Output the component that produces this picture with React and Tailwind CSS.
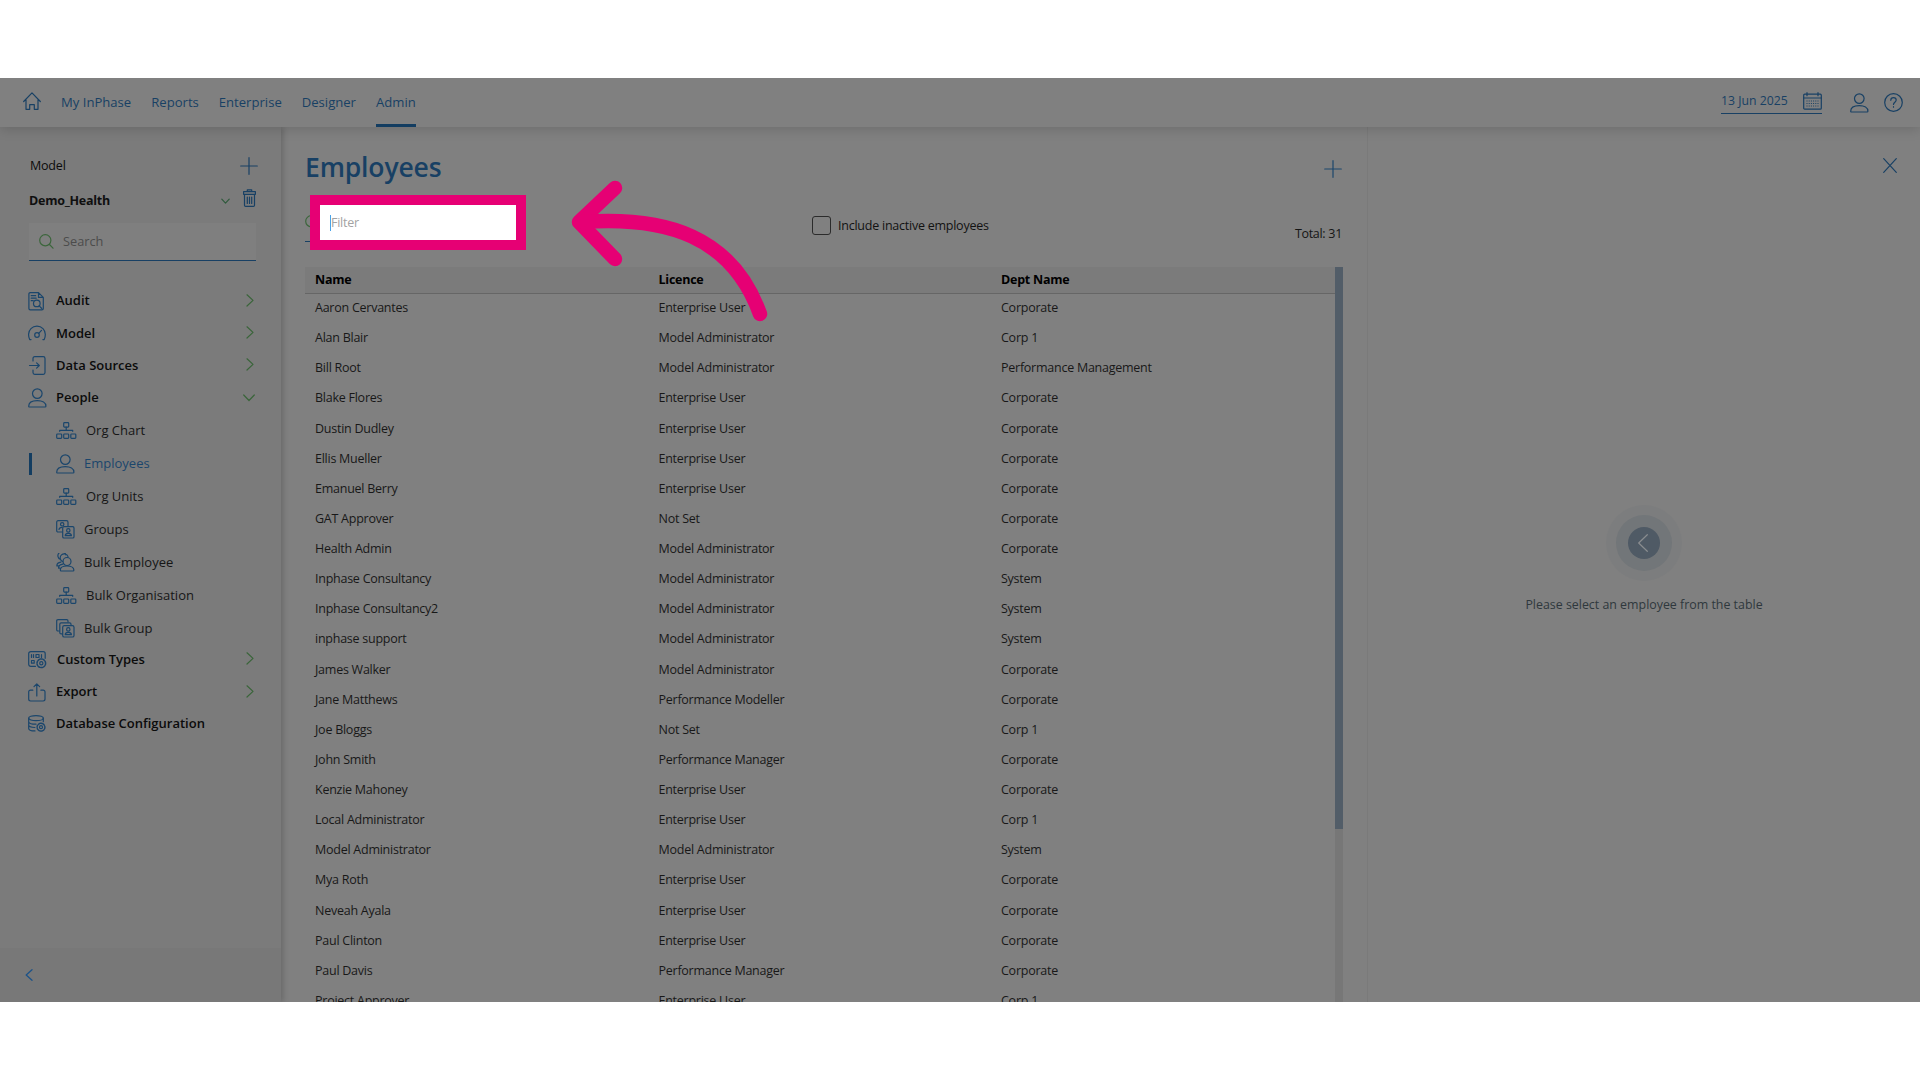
import { useState } from 'react'

const navItems = ['My InPhase', 'Reports', 'Enterprise', 'Designer', 'Admin']

const employees = [
  ['Aaron Cervantes', 'Enterprise User', 'Corporate'],
  ['Alan Blair', 'Model Administrator', 'Corp 1'],
  ['Bill Root', 'Model Administrator', 'Performance Management'],
  ['Blake Flores', 'Enterprise User', 'Corporate'],
  ['Dustin Dudley', 'Enterprise User', 'Corporate'],
  ['Ellis Mueller', 'Enterprise User', 'Corporate'],
  ['Emanuel Berry', 'Enterprise User', 'Corporate'],
  ['GAT Approver', 'Not Set', 'Corporate'],
  ['Health Admin', 'Model Administrator', 'Corporate'],
  ['Inphase Consultancy', 'Model Administrator', 'System'],
  ['Inphase Consultancy2', 'Model Administrator', 'System'],
  ['inphase support', 'Model Administrator', 'System'],
  ['James Walker', 'Model Administrator', 'Corporate'],
  ['Jane Matthews', 'Performance Modeller', 'Corporate'],
  ['Joe Bloggs', 'Not Set', 'Corp 1'],
  ['John Smith', 'Performance Manager', 'Corporate'],
  ['Kenzie Mahoney', 'Enterprise User', 'Corporate'],
  ['Local Administrator', 'Enterprise User', 'Corp 1'],
  ['Model Administrator', 'Model Administrator', 'System'],
  ['Mya Roth', 'Enterprise User', 'Corporate'],
  ['Neveah Ayala', 'Enterprise User', 'Corporate'],
  ['Paul Clinton', 'Enterprise User', 'Corporate'],
  ['Paul Davis', 'Performance Manager', 'Corporate'],
  ['Project Approver', 'Enterprise User', 'Corp 1']
]

function Icon({ w = 18, h = 18, className = '', sw = 1.2, children }) {
  return (
    <svg
      width={w}
      height={h}
      viewBox={`0 0 ${w} ${h}`}
      fill="none"
      stroke="currentColor"
      strokeWidth={sw}
      strokeLinecap="round"
      strokeLinejoin="round"
      className={`shrink-0 ${className}`}
    >
      {children}
    </svg>
  )
}

const PersonIcon = ({ className }) => (
  <Icon w={19} h={20} className={className}>
    <circle cx="9.3" cy="5.6" r="4.8" />
    <path d="M.7 18.2c0-3.6 3.6-5.6 8.6-5.6s8.600 2 8.600 5.600c0 .5-.3.8-.8.8H1.500c-.5 0-.8-.3-.8-.8z" />
  </Icon>
)

const OrgIcon = () => (
  <Icon w={21} h={17}>
    <rect x="7.7" y=".7" width="5" height="4.400" rx=".8" />
    <path d="M10.200 5.200v3M3.700 9.300V8.300h13v1" />
    <rect x=".7" y="12" width="5" height="4.400" rx=".8" />
    <rect x="7.7" y="12" width="5" height="4.400" rx=".8" />
    <rect x="14.800" y="12" width="5" height="4.400" rx=".8" />
  </Icon>
)

const AuditIcon = () => (
  <Icon w={17} h={19}>
    <path d="M10.500.6H2.300C1.400.6.9 1.100.9 2v14.500c0 .9.500 1.400 1.400 1.400h11.600c.9 0 1.400-.5 1.400-1.400V5.400L10.500.6v4.800h4.800M3.200 3.700h4.500M3.200 6.200h5M3.200 8.700h2" />
    <circle cx="8.800" cy="11.400" r="3.300" />
    <path d="M11.200 13.800l2.600 2.700" />
  </Icon>
)

const GaugeIcon = () => (
  <Icon w={18} h={16}>
    <path d="M3 14.600H1.700C1 13.200.6 11.500.6 9.700A8.300 8.300 0 0 1 9 1.100a8.300 8.300 0 0 1 8.300 8.600c0 1.800-.4 3.500-1.100 4.900h-1.300" />
    <circle cx="9" cy="10" r="2.300" />
    <path d="M10.700 8.300l2.800-2.900" />
  </Icon>
)

const SourceIcon = () => (
  <Icon w={18} h={19}>
    <path d="M5 5V2.500C5 1.400 5.700.7 6.800.7h8.400c1.100 0 1.800.7 1.800 1.800v14c0 1.100-.7 1.800-1.800 1.800H6.800C5.700 18.300 5 17.600 5 16.500V14M1.500 9.500h9.700M8.600 6.800l2.700 2.700-2.700 2.700" />
  </Icon>
)

const GroupsIcon = () => (
  <Icon w={19} h={19}>
    <path d="M6 12H2.200C1.200 12 .7 11.500.7 10.500V2.200C.7 1.200 1.200.7 2.200.7h8.300c1 0 1.500.5 1.500 1.500V6" />
    <circle cx="6.200" cy="4.300" r="1.700" />
    <path d="M3 9.500c.2-1.500 1.400-2.200 3-2.200" />
    <rect x="6.700" y="6.700" width="11.300" height="11.300" rx="1.300" />
    <circle cx="12.300" cy="10.400" r="1.700" />
    <path d="M9.200 15.700c0-1.600 1.200-2.400 3.100-2.400s3.100.8 3.100 2.400z" />
  </Icon>
)

const BulkPeopleIcon = () => (
  <Icon w={19} h={19}>
    <circle cx="11" cy="8.500" r="4" />
    <path d="M4.300 17c0-2.600 2.800-4 6.700-4s6.700 1.400 6.900 4c0 .7-.3 1-.9 1H5.200c-.6 0-.9-.3-.9-1z" />
    <path d="M6.600 8.500A4 4 0 1 1 12 3.600M4.600 6.500A4 4 0 1 1 9.800 1.800M2.600 15.200c-.2-2.400 1.500-3.600 4.200-4M.9 12.900c-.2-2.100 1.400-3.400 4-3.800M2.600 15.200h1.500M.9 12.900h1.600" />
  </Icon>
)

const BulkGroupIcon = () => (
  <Icon w={19} h={19}>
    <path d="M3 12H2C1.100 12 .7 11.500.7 10.700V2C.7 1.100 1.100.7 2 .7h8.700c.8 0 1.300.4 1.300 1.300v1" />
    <path d="M6.300 14.900H5.100c-.8 0-1.300-.4-1.300-1.300V5.200c0-.9.5-1.300 1.300-1.300h8.600c.8 0 1.300.4 1.300 1.300v1" />
    <rect x="6.700" y="6.700" width="11.300" height="11.300" rx="1.600" />
    <circle cx="12.300" cy="10.400" r="1.700" />
    <path d="M9.200 15.700c0-1.600 1.200-2.400 3.100-2.400s3.100.8 3.100 2.400z" />
  </Icon>
)

const TypesIcon = () => (
  <Icon w={19} h={18}>
    <path d="M7.500 15.300H2.800C1.500 15.300.7 14.600.7 13.300V2.700C.7 1.400 1.500.7 2.800.7h12.400c1.300 0 2 .7 2 2v4.600" />
    <path d="M3.500 3.500v3M5.500 3.500v3M8 3.500h3v3H8zM13.500 3.500v3M3.500 9.500h2.700v2.700H3.500z" />
    <circle cx="13.300" cy="12.300" r="4.300" strokeDasharray="1.700 1" strokeWidth="1.500" />
    <circle cx="13.300" cy="12.300" r="1.600" />
  </Icon>
)

const ExportIcon = () => (
  <Icon w={18} h={19}>
    <path d="M4.800 7.200H2.600C1.400 7.200.7 7.900.7 9.100v7c0 1.200.7 1.900 1.900 1.900h12.500c1.200 0 1.900-.7 1.900-1.900v-7c0-1.200-.7-1.900-1.900-1.900h-2.200M8.800 13V.8M6 3.600L8.800.8l2.800 2.800" />
  </Icon>
)

const DatabaseIcon = () => (
  <Icon w={18} h={18}>
    <ellipse cx="8" cy="3.200" rx="7.300" ry="2.500" />
    <path d="M.7 3.200v10.200c0 1.400 3 2.500 6.300 2.500M15.300 3.200v3.500M.7 6.700c0 1.400 3.300 2.500 7.300 2.500M.7 10c0 1.300 2.700 2.400 6.200 2.500" />
    <circle cx="13" cy="12.200" r="3.900" strokeDasharray="1.600 .9" strokeWidth="1.400" />
    <circle cx="13" cy="12.200" r="1.500" />
  </Icon>
)

const Chevron = ({ down }) =>
  down ? (
    <Icon w={12} h={8} className="text-[#3a653a]">
      <path d="M.7 1l5.300 5.500L11.300 1" />
    </Icon>
  ) : (
    <Icon w={8} h={13} className="mr-px mb-0.5 text-[#3a653a]">
      <path d="M1 .8l6 5.600L1 12" />
    </Icon>
  )

const PlusIcon = () => (
  <Icon w={18} h={18}>
    <path d="M9 .7v16.600M.7 9h16.600" />
  </Icon>
)

function Section({ icon, label, arrow, wide }) {
  return (
    <div className="flex h-[32.200px] items-center pr-[26px] pl-7">
      <span className={wide ? 'flex w-[29px] text-[#1b466c]' : 'flex w-7 text-[#1b466c]'}>{icon}</span>
      <span className="flex-1 text-[13px] font-semibold text-[#0b0b0b]">{label}</span>
      {arrow && <Chevron down={arrow === 'down'} />}
    </div>
  )
}

function SubItem({ icon, label, active, wide }) {
  return (
    <div className="flex h-[33px] items-center pl-[29px]">
      <span className={active ? 'h-[22px] w-[3px] bg-[#133d61]' : 'w-[3px]'} />
      <span className={wide ? 'ml-6 flex w-[30px] text-[#1b466c]' : 'ml-6 flex w-7 text-[#1b466c]'}>{icon}</span>
      <span className={active ? 'text-[13px] text-[#1b466c]' : 'text-[13px] text-[#161616]'}>{label}</span>
    </div>
  )
}

function Header() {
  return (
    <header className="relative z-10 flex h-[49px] shrink-0 items-center bg-[#808080] pl-[23px] text-[#184064] shadow-[0_2px_12px_rgba(0,0,0,0.16)]">
      <Icon w={18} h={18} className="mb-1">
        <path d="M.7 9.500L9 .9l8.300 8.600M3 8v9.300h3.700v-4.600h4.600v4.600H15V8" />
      </Icon>
      <nav className="ml-5 flex h-full gap-[20px] text-[13.100px]">
        {navItems.map(item => (
          <a
            key={item}
            className={`flex items-center border-b-3 pt-[3px] ${item === 'Admin' ? 'border-[#133d61]' : 'border-transparent'}`}
          >
            {item}
          </a>
        ))}
      </nav>
      <div className="ml-auto flex items-center pr-[17px]">
        <div className="mt-px flex h-[22px] w-[101px] items-start justify-between border-b border-[#184064] text-[12.250px] leading-[17px]">
          <span>13 Jun 2025</span>
          <Icon w={19} h={18}>
            <rect x=".7" y="2.200" width="17.600" height="15" rx="1" />
            <path d="M.7 6h17.600M4 .7v3M15 .7v3" />
            <path d="M3.500 9h12.500M3.500 11.500h12.500M3.500 14h12.500" strokeDasharray="1 1.200" strokeLinecap="butt" />
          </Icon>
        </div>
        <PersonIcon className="ml-7" />
        <Icon w={19} h={19} className="ml-[15px]">
          <circle cx="9.500" cy="9.500" r="8.800" />
          <path d="M6.800 7.300c0-1.600 1.100-2.600 2.700-2.600s2.700 1 2.700 2.400c0 2-2.700 2.200-2.700 4.300M9.500 13.700v.5" />
        </Icon>
      </div>
    </header>
  )
}

function Sidebar() {
  return (
    <aside className="flex w-[281px] shrink-0 flex-col bg-[#7b7b7b] shadow-[2px_0_6px_rgba(0,0,0,0.2)]">
      <div className="mt-[29px] flex h-5 items-center justify-between pr-[23px] pl-[30px]">
        <span className="text-[12.500px] tracking-[-0.200px] text-[#0b0b0b]">Model</span>
        <span className="text-[#184064]"><PlusIcon /></span>
      </div>
      <div className="mt-[15px] flex h-5 items-center pr-[25px] pl-[29px]">
        <span className="flex-1 pt-px text-[12.500px] font-bold tracking-[-0.250px] text-[#0f0f0f]">Demo_Health</span>
        <Icon w={9} h={7} className="mr-[13px] text-[#2f5a3c]">
          <path d="M.8 1.200l3.700 3.900 3.700-3.900" />
        </Icon>
        <Icon w={13} h={18} className="mb-1.5 text-[#184064]">
          <path d="M.6 2.700h11.800v2.600H.6zM4.300 2.500V.8h4.400v1.700M1.500 5.500v10.700c0 .7.400 1.100 1.100 1.100h7.800c.7 0 1.100-.4 1.100-1.100V5.500M4.300 8v6.500M6.500 8v6.500M8.700 8v6.500" />
        </Icon>
      </div>
      <div className="mt-[12px] mr-[25px] ml-[29px] flex h-[38px] items-center border-b border-[#184064] bg-[#7f7f7f] pl-[10px]">
        <Icon w={15} h={15} className="text-[#3c663c]">
          <circle cx="6.300" cy="6.300" r="5.600" />
          <path d="M10.500 10.500l3.500 3.700" />
        </Icon>
        <span className="ml-[9px] text-[12.750px] text-[#4c4c4c]">Search</span>
      </div>

      <div className="mt-[24px] flex flex-1 flex-col">
        <Section icon={<AuditIcon />} label="Audit" arrow="right" />
        <Section icon={<GaugeIcon />} label="Model" arrow="right" />
        <Section icon={<SourceIcon />} label="Data Sources" arrow="right" />
        <Section icon={<PersonIcon />} label="People" arrow="down" />
        <div className="mt-[0.500px] -mb-[1.500px]">
          <SubItem icon={<OrgIcon />} label="Org Chart" wide />
          <SubItem icon={<PersonIcon />} label="Employees" active />
          <SubItem icon={<OrgIcon />} label="Org Units" wide />
          <SubItem icon={<GroupsIcon />} label="Groups" />
          <SubItem icon={<BulkPeopleIcon />} label="Bulk Employee" />
          <SubItem icon={<OrgIcon />} label="Bulk Organisation" wide />
          <SubItem icon={<BulkGroupIcon />} label="Bulk Group" />
        </div>
        <Section icon={<TypesIcon />} label="Custom Types" arrow="right" wide />
        <Section icon={<ExportIcon />} label="Export" arrow="right" />
        <Section icon={<DatabaseIcon />} label="Database Configuration" />
      </div>

      <div className="flex h-[54px] items-center bg-[#787878] pl-[25px] text-[#1d5388]">
        <Icon w={8} h={12} sw={1.3}>
          <path d="M7 .7L1.200 6 7 11.300" />
        </Icon>
      </div>
    </aside>
  )
}

function EmployeesPanel() {
  const [inactive, setInactive] = useState(false)

  return (
    <main className="flex min-w-0 flex-1 flex-col overflow-hidden px-6 pt-[21px]">
      <div className="flex h-10 items-center justify-between">
        <h1 className="text-[26.500px] font-semibold tracking-[-0.150px] text-[#184064]">Employees</h1>
        <span className="pt-px pr-px text-[#1b466c]"><PlusIcon /></span>
      </div>

      <div className="mt-[7px] flex h-[72px] items-start">
        <div className="relative flex h-[55px] w-[219px] shrink-0 items-center">
          <Icon w={15} h={15} className="text-[#3c663c]">
            <circle cx="6.300" cy="6.300" r="5.600" />
          </Icon>
          <div className="absolute top-[46px] left-0 h-px w-5 bg-[#184064]" />
          {/* Highlighted filter box */}
          <div className="absolute top-0 left-[5px] flex h-[55px] w-[216px] items-center border-10 border-[#e60074] bg-white pl-[10px]">
            <span className="h-4 w-px bg-[#4aa3e8]" />
            <span className="pt-px text-[12.500px] tracking-[-0.250px] text-[#a3a3a3]">Filter</span>
          </div>
        </div>
        <label className="mt-[21px] ml-[288px] flex items-center gap-[7px] text-[12.500px] tracking-[-0.240px] text-[#121212]">
          <button
            onClick={() => setInactive(!inactive)}
            className="h-[19px] w-[19px] rounded-[3px] border border-[#2b2b2b]"
          />
          <span className="pt-px">Include inactive employees</span>
        </label>
        <span className="mt-[30px] mr-px ml-auto text-[12.500px] tracking-[-0.300px] text-[#151515]">Total: 31</span>
      </div>

      <div className="flex min-h-0 flex-1">
        <div className="min-w-0 flex-1 overflow-hidden text-[12.500px] tracking-[-0.250px] text-[#181818]">
          <div className="grid h-[27px] grid-cols-[343.500px_342.500px_1fr] items-center border-b border-[#666] bg-[#7b7b7b] pl-[10px] font-bold text-black">
            <span>Name</span>
            <span>Licence</span>
            <span>Dept Name</span>
          </div>
          <div className="-mt-[0.700px]">
            {employees.map(([name, licence, dept]) => (
              <div key={name} className="grid h-[30.130px] grid-cols-[343.500px_342.500px_1fr] items-center pl-[10px]">
                <span>{name}</span>
                <span>{licence}</span>
                <span>{dept}</span>
              </div>
            ))}
          </div>
        </div>
        <div className="w-[8px] bg-[#777]">
          <div className="h-[562px] bg-[#525d68]" />
        </div>
      </div>
    </main>
  )
}

function DetailPanel() {
  return (
    <section className="flex w-[553px] shrink-0 flex-col border-l border-[#7a7a7a]">
      <div className="flex justify-end pt-[31px] pr-[23px] text-[#184064]">
        <Icon w={14} h={15}>
          <path d="M.7.7l12.600 13.600M13.300.7L.7 14.300" />
        </Icon>
      </div>
      <div className="mt-[332px] flex flex-col items-center">
        <div className="flex size-[76px] items-center justify-center rounded-full bg-[#7c7d7e]">
          <div className="flex size-14 items-center justify-center rounded-full bg-[#727679]">
            <div className="flex size-8 items-center justify-center rounded-full bg-[#4f5a65] text-[#8a8d90]">
              <Icon w={10} h={18} className="mr-[3px]">
                <path d="M9.300.7L.7 9l8.600 8.300" />
              </Icon>
            </div>
          </div>
        </div>
        <p className="mt-[15px] text-[12.400px] text-[#2f383d]">Please select an employee from the table</p>
      </div>
    </section>
  )
}

export default function App() {
  return (
    <div className="h-[1080px] w-[1920px] overflow-hidden bg-white py-[78px] font-['Open_Sans',sans-serif]">
      <div className="relative flex h-[924px] flex-col overflow-hidden bg-[#808080]">
        <Header />
        <div className="flex min-h-0 flex-1">
          <Sidebar />
          <EmployeesPanel />
          <DetailPanel />
        </div>

        {/* Pointer arrow */}
        <svg
          className="absolute top-[102px] left-[570px] text-[#e60074]"
          width="200"
          height="145"
          viewBox="0 0 200 145"
          fill="none"
          stroke="currentColor"
          strokeWidth="14.500"
          strokeLinecap="round"
          strokeLinejoin="round"
        >
          <path d="M45 8L9 42l36 37" />
          <path d="M12 42c84-6 150 14 178 92" />
        </svg>
      </div>
    </div>
  )
}
